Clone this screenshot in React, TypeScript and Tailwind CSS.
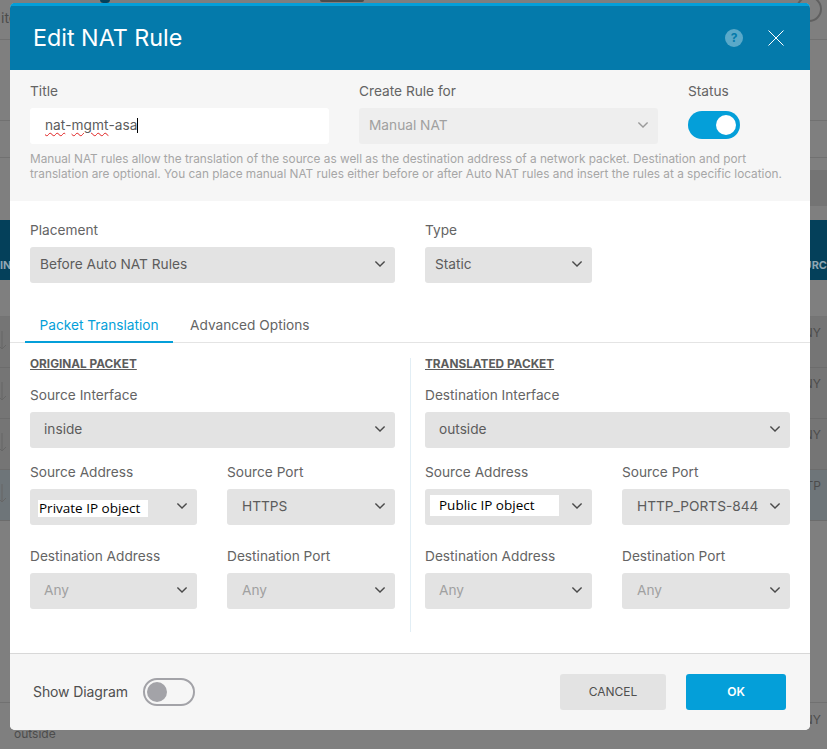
import React from "react";

const font = { fontFamily: "Inter, sans-serif" };

function Chevron({ className = "text-[#4a4a4a]" }: { className?: string }) {
  return (
    <svg width="12" height="8" viewBox="0 0 12 8" fill="none" className={`${className} -mt-[1px]`}>
      <path d="M1.4 1.4 6 6l4.600-4.600" stroke="currentColor" strokeWidth="1.4" />
    </svg>
  );
}

function Select({
  value,
  width,
  pad = "pl-[14px]",
  tone = "text-[#5c5c5c]",
  children,
}: {
  value?: string;
  width: string;
  pad?: string;
  tone?: string;
  children?: React.ReactNode;
}) {
  return (
    <div className={`${width} ${pad} pr-[9px] pb-[2px] h-9 rounded-[3px] bg-[#e3e3e3] flex items-center justify-between text-[13.7px] ${tone}`}>
      {children ?? <span className="whitespace-nowrap">{value}</span>}
      <Chevron />
    </div>
  );
}

function Field({ label, children }: { label: string; children: React.ReactNode }) {
  return (
    <div className="flex flex-col gap-[8px]">
      <div className="mt-[1px] text-[13.7px] leading-[17px] text-[#646464]">{label}</div>
      {children}
    </div>
  );
}

function Sticker({ text, box }: { text: string; box: string }) {
  return (
    <span className={`${box} bg-white text-[13.5px] text-black flex items-center`} style={{ fontFamily: '"Open Sans", sans-serif' }}>
      {text}
    </span>
  );
}

function PacketColumn({
  heading,
  ifaceLabel,
  iface,
  addr,
  port,
}: {
  heading: string;
  ifaceLabel: string;
  iface: string;
  addr: React.ReactNode;
  port: string;
}) {
  return (
    <div className="w-[365px] flex flex-col">
      <div className="text-[11.8px] leading-[15px] font-bold underline text-[#5c5c5c] mb-[14px]">{heading}</div>
      <Field label={ifaceLabel}>
        <Select value={iface} width="w-[365px]" />
      </Field>
      <div className="flex gap-[30px] mt-[15px]">
        <Field label="Source Address">
          <Select width="w-[167px]" pad="pl-[0px]">{addr}</Select>
        </Field>
        <Field label="Source Port">
          <Select value={port} width="w-[168px]" pad="pl-[15px]" />
        </Field>
      </div>
      <div className="flex gap-[30px] mt-[22px]">
        <Field label="Destination Address">
          <Select value="Any" width="w-[167px]" pad="pl-[14px]" tone="text-[#a0a0a0]" />
        </Field>
        <Field label="Destination Port">
          <Select value="Any" width="w-[168px]" pad="pl-[15px]" tone="text-[#a0a0a0]" />
        </Field>
      </div>
    </div>
  );
}

function RuleRow({ tone, right }: { tone: string; right: string }) {
  return (
    <div className={`${tone} h-[51px] border-b border-[#6c6c6c] flex justify-between pt-[8px] text-xs text-[#4c4c4c] overflow-hidden`}>
      <svg width="10" height="24" viewBox="0 0 10 24" fill="none" className="mt-[4px] text-[#666666]">
        <path d="M2 2v18M-2 16l4 4 4-4" stroke="currentColor" strokeWidth="1" />
      </svg>
      <span className="whitespace-nowrap pr-[6px]">{right}</span>
    </div>
  );
}

export default function App() {
  return (
    <div className="relative w-[827px] h-[749px] overflow-hidden bg-[#7f7f7f]" style={font}>
      {/* dimmed page behind the dialog */}
      <div className="flex flex-col">
        <div className="h-[40px] border-b border-[#717171] flex items-start text-sm text-[#4c4c4c] pt-[8px] pl-[1px]">
          <span>ite</span>
        </div>
        <div className="h-[81px] border-b border-[#717171]" />
        <div className="h-[37px] border-b border-[#717171]" />
        <div className="h-[12px]" />
        <div className="h-[36px] ml-[700px] bg-[#747474]" />
        <div className="h-[14px]" />
        <div className="h-[60px] bg-[#04405a] flex items-end justify-between pb-[7px] text-[11px] font-bold text-[#8fa7b3] overflow-hidden">
          <span>IN</span>
          <span className="whitespace-nowrap">URC</span>
        </div>
        <div className="h-[37px] border-b border-[#747474]" />
        <RuleRow tone="bg-[#757575]" right="ANY" />
        <RuleRow tone="bg-[#757575]" right="ANY" />
        <RuleRow tone="bg-[#757575]" right="ANY" />
        <RuleRow tone="bg-[#6e7579]" right="TTP" />
        <div className="h-[182px] border-b border-[#717171]" />
        <div className="h-[45px] pl-[14px] pr-[6px] flex justify-between text-xs text-[#4c4c4c] pt-[9px]">
          <span className="mt-[14px]">outside</span>
          <span>ANY</span>
        </div>
      </div>

      {/* bits of the page's top bar showing above the dialog */}
      <span className="absolute left-[100px] -top-[4px] w-[10px] h-[7px] rounded-full bg-[#04405a]" />
      <span className="absolute left-[320px] -top-[2px] w-[44px] h-[4px] rounded-[2px] bg-[#4c4c4c]" />
      <span className="absolute left-[796px] -top-[4px] w-[26px] h-[26px] rounded-full border-2 border-[#606060]" />

      {/* dialog */}
      <div className="absolute left-[10px] top-[3px] w-[800px] h-[727px] bg-white rounded-[5px] overflow-hidden flex flex-col">
        <header className="h-[67px] shrink-0 bg-[#047aab] border-t-[3px] border-[#049fd9] pl-[23px] pr-[26px] flex items-center justify-between">
          <h1 className="text-[23.300px] text-white leading-none">Edit NAT Rule</h1>
          <div className="flex items-center gap-[25px]">
            <span className="w-[18px] h-[18px] rounded-full bg-[#5aa9c9] text-[#047aab] text-xs font-bold flex items-center justify-center">?</span>
            <svg width="16" height="16" viewBox="0 0 16 16" fill="none" className="text-white">
              <path d="M.5.5l15 15M15.500.5l-15 15" stroke="currentColor" strokeWidth="1" />
            </svg>
          </div>
        </header>

        <section className="h-[131px] shrink-0 bg-[#f6f6f6] px-[20px] pt-[12px]">
          <div className="flex gap-[30px]">
            <Field label="Title">
              <div className="w-[299px] h-9 pb-[2px] rounded-[3px] bg-white pl-[15px] flex items-center text-[13.7px] text-[#5c5c5c]">
                <span className="underline decoration-wavy decoration-[#e02020] decoration-1 underline-offset-2">nat</span>
                <span>-</span>
                <span className="underline decoration-wavy decoration-[#e02020] decoration-1 underline-offset-2">mgmt</span>
                <span>-asa</span>
                <span className="w-px h-[15px] bg-black" />
              </div>
            </Field>
            <Field label="Create Rule for">
              <div className="w-[299px] h-9 pb-[2px] rounded-[3px] bg-[#eeeeee] pl-[10px] pr-[9px] flex items-center justify-between text-[13.7px] text-[#a0a0a0]">
                <span>Manual NAT</span>
                <Chevron className="text-[#9a9a9a]" />
              </div>
            </Field>
            <Field label="Status">
              <div className="w-[52px] h-[28px] mt-[3px] rounded-full bg-[#049fd9] flex items-center justify-end pr-[4px]">
                <span className="w-[20px] h-[20px] rounded-full bg-white" />
              </div>
            </Field>
          </div>
          <p className="mt-[8px] text-[11.800px] leading-[15px] text-[#a6a6a6] whitespace-nowrap">
            Manual NAT rules allow the translation of the source as well as the destination address of a network packet. Destination and port
            <br />
            translation are optional. You can place manual NAT rules either before or after Auto NAT rules and insert the rules at a specific location.
          </p>
        </section>

        <section className="flex-1 flex flex-col pt-[20px]">
          <div className="flex gap-[30px] px-[20px]">
            <Field label="Placement">
              <Select value="Before Auto NAT Rules" width="w-[365px]" pad="pl-[10px]" />
            </Field>
            <Field label="Type">
              <Select value="Static" width="w-[167px]" pad="pl-[10px]" />
            </Field>
          </div>

          <div className="mt-[26px] h-[34px] border-b border-[#e4e4e4] pl-[15px] flex text-[13.7px]">
            <div className="w-[148px] h-[34px] border-b-[2px] border-[#049fd9] text-[#049fd9] flex justify-center pt-[6px]">Packet Translation</div>
            <div className="ml-[17px] text-[#646464] pt-[6px]">Advanced Options</div>
          </div>

          <div className="flex pl-[20px] pt-[14px]">
            <PacketColumn
              heading="ORIGINAL PACKET"
              ifaceLabel="Source Interface"
              iface="inside"
              addr={<div className="pl-[8px] mt-[5px]"><Sticker text="Private IP object" box="w-[110px] h-[17px] pl-[1px]" /></div>}
              port="HTTPS"
            />
            <div className="ml-[15px] mr-[14px] w-px h-[274px] mt-[1px] bg-[#e2eef5]" />
            <PacketColumn
              heading="TRANSLATED PACKET"
              ifaceLabel="Destination Interface"
              iface="outside"
              addr={<div className="pl-[5px] -mt-[1px]"><Sticker text="Public IP object" box="w-[129px] h-[21px] pl-[9px]" /></div>}
              port="HTTP_PORTS-844"
            />
          </div>
        </section>

        <footer className="h-[77px] shrink-0 bg-[#f6f6f6] border-t border-[#d8d8d8] pl-[23px] pr-[24px] flex items-center justify-between">
          <div className="flex items-center gap-[15px]">
            <span className="text-sm tracking-[-0.1px] text-[#4f4f4f]">Show Diagram</span>
            <div className="w-[52px] h-[28px] rounded-full border-2 border-[#a3a3a8] bg-[#f6f6f6] flex items-center pl-[2px]">
              <span className="w-[20px] h-[20px] rounded-full bg-[#a3a3a8]" />
            </div>
          </div>
          <div className="flex gap-[20px]">
            <button className="w-[106px] h-9 rounded-[3px] bg-[#e3e3e3] text-xs text-[#4f4f4f]">CANCEL</button>
            <button className="w-[100px] h-9 rounded-[3px] bg-[#049fd9] text-xs font-semibold text-white">OK</button>
          </div>
        </footer>
      </div>
    </div>
  );
}
